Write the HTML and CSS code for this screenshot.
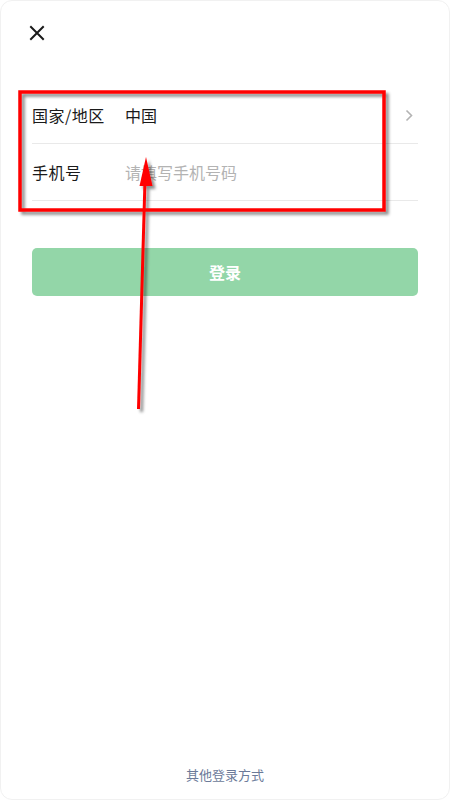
FILE: index.html
```html
<!DOCTYPE html>
<html lang="zh">
<head>
  <meta charset="UTF-8">
  <meta name="viewport" content="width=device-width, initial-scale=1.0">
  <title>登录</title>
  <link rel="stylesheet" href="styles.css">
</head>
<body>
  <div class="window">
    <!-- Cerrar -->
    <div class="top-bar">
      <button class="close-btn" aria-label="关闭">
        <svg width="16" height="16" viewBox="0 0 16 16">
          <path d="M2 2 L14 14 M14 2 L2 14" stroke="#1a1a1a" stroke-width="2" stroke-linecap="square"/>
        </svg>
      </button>
    </div>

    <!-- Formulario -->
    <div class="form">
      <div class="row">
        <span class="label">国家/地区</span>
        <span class="value">中国</span>
        <svg class="chevron" width="8" height="13" viewBox="0 0 8 13">
          <path d="M1.5 1.5 L6.5 6.5 L1.5 11.5" fill="none" stroke="#b3b3b3" stroke-width="1.6"/>
        </svg>
      </div>
      <div class="row">
        <span class="label">手机号</span>
        <input class="phone" type="tel" placeholder="请填写手机号码">
      </div>
    </div>

    <button class="login-btn">登录</button>

    <div class="spacer"></div>
    <div class="other">其他登录方式</div>

    <!-- Marca roja encima del formulario -->
    <svg class="mark" width="450" height="800" viewBox="0 0 450 800">
      <defs>
        <filter id="shadow" x="-10%" y="-10%" width="130%" height="130%">
          <feDropShadow dx="3" dy="3" stdDeviation="1.5" flood-color="#000" flood-opacity="0.45"/>
        </filter>
      </defs>
      <g filter="url(#shadow)">
        <rect x="20" y="92" width="364" height="118" fill="none" stroke="#ff0000" stroke-width="3.5"/>
        <line x1="138.5" y1="409" x2="145" y2="180" stroke="#ff0000" stroke-width="3"/>
        <polygon points="146,157 152.5,186 139.5,186" fill="#ff0000"/>
      </g>
    </svg>
  </div>
</body>
</html>
```

FILE: styles.css
```css
html, body {
  margin: 0;
  height: 100%;
  background: #ffffff;
  font-family: "Noto Sans CJK SC", "Noto Sans", sans-serif;
}

.window {
  position: relative;
  box-sizing: border-box;
  height: 800px;
  border: 1px solid #f1f1f1;
  border-radius: 12px;
  display: flex;
  flex-direction: column;
  padding: 0 31px 0 31px;
  overflow: hidden;
}

.top-bar {
  height: 63px;
  display: flex;
  align-items: center;
}

.close-btn {
  border: none;
  background: none;
  padding: 0;
  margin-left: -3px;
  width: 16px;
  height: 16px;
  cursor: pointer;
}

.form {
  margin-top: 23px;
}

.row {
  display: flex;
  align-items: center;
  height: 56px;
  border-bottom: 1px solid #e9e9e9;
  font-size: 16px;
  color: #1a1a1a;
}

.label {
  width: 93px;
  letter-spacing: 0.5px;
}

.value {
  flex: 1;
}

.chevron {
  margin-right: 5px;
}

.phone {
  flex: 1;
  border: none;
  outline: none;
  padding: 0;
  font-family: inherit;
  font-size: 16px;
  color: #1a1a1a;
  background: transparent;
}

.phone::placeholder {
  color: #b3b3b3;
}

.login-btn {
  margin-top: 47px;
  height: 48px;
  border: none;
  border-radius: 5px;
  background: #93d6a8;
  color: #ffffff;
  font-family: inherit;
  font-size: 16px;
  font-weight: bold;
  cursor: pointer;
}

.spacer {
  flex: 1;
}

.other {
  text-align: center;
  font-size: 13px;
  color: #6b7a99;
  margin-bottom: 15px;
}

.mark {
  position: absolute;
  left: -1px;
  top: -1px;
  pointer-events: none;
}
```
